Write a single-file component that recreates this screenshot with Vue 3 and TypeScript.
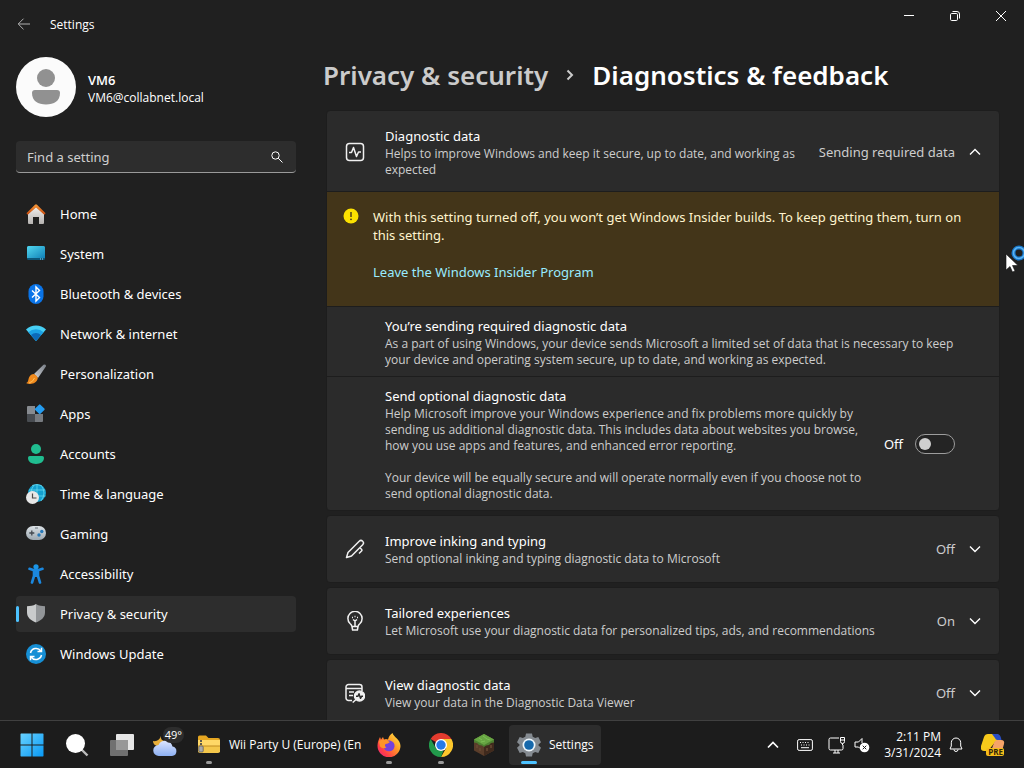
<script setup lang="ts">
import { ref } from 'vue'

interface NavItem {
  label: string
  icon: string
}

interface SettingCard {
  title: string
  description: string
  value: string
  icon: string
}

const search = ref('')
const optionalData = ref(false)
const current = ref('Privacy & security')

const navItems: NavItem[] = [
  {
    label: 'Home',
    icon: `<defs><linearGradient id="roof" x1="0" y1="0" x2="0" y2="1"><stop offset="0" stop-color="#f79a3a"/><stop offset="1" stop-color="#c9490d"/></linearGradient><linearGradient id="wall" x1="0" y1="0" x2="0" y2="1"><stop offset="0" stop-color="#f2f0ee"/><stop offset="1" stop-color="#b5b2b0"/></linearGradient></defs>
      <path d="M2 10 10 2.500 18 10v9a1 1 0 0 1-1 1h-4v-7H7v7H3a1 1 0 0 1-1-1z" fill="url(#wall)"/><path d="M.4 9.200 9 .7a1.400 1.400 0 0 1 2 0l8.600 8.500-1.300 1.500L10 3.400l-8.300 7.300z" fill="url(#roof)"/>`,
  },
  {
    label: 'System',
    icon: `<defs><linearGradient id="screen" x1="0" y1="0" x2="1" y2="1"><stop offset="0" stop-color="#52d8f0"/><stop offset="1" stop-color="#1181b8"/></linearGradient></defs>
      <rect x="1" y="2" width="18" height="14" rx="1.500" fill="#0c5578"/><path d="M2.500 2h15A1.500 1.500 0 0 1 19 3.500V14H1V3.500A1.500 1.500 0 0 1 2.500 2z" fill="url(#screen)"/><path d="M14 15h1m1 0h1" stroke="#8edcf5"/>`,
  },
  {
    label: 'Bluetooth & devices',
    icon: `<rect x="2.500" y="0" width="15" height="20" rx="7.500" fill="#0a74e8"/><path d="m6 6.500 7.500 7L10 17V3l3.500 3.500L6 13.500" fill="none" stroke="#fff" stroke-width="1.400"/>`,
  },
  {
    label: 'Network & internet',
    icon: `<path d="M10 17 0 5.500a14.500 14.500 0 0 1 20 0z" fill="#47d0f5"/><path d="M10 17 2.400 8.200a11 11 0 0 1 15.200 0z" fill="#1ba1e5"/><path d="M10 17 5 11a7.500 7.500 0 0 1 10 0z" fill="#0c69b8"/>`,
  },
  {
    label: 'Personalization',
    icon: `<defs><linearGradient id="handle" x1="1" y1="0" x2="0" y2="1"><stop offset="0" stop-color="#777d85"/><stop offset="1" stop-color="#ced1d6"/></linearGradient></defs>
      <path d="M8 10 17.500.8a1.500 1.500 0 0 1 2.200 2L12 14z" fill="url(#handle)"/><path d="M7.800 10q3 .8 4 4C10.800 20 4 21 0 19c2.500-.8 2-2.500 3-5.500 1-2.500 3-3.500 4.800-3.500z" fill="#f08a1d"/><path d="M3 19q4-1 5.500-5" fill="none" stroke="#ffc15a"/>`,
  },
  {
    label: 'Apps',
    icon: `<path d="M2 2h7v8H1V3a1 1 0 0 1 1-1z" fill="#878b90"/><path d="M1 10h8v8H2a1 1 0 0 1-1-1z" fill="#484c51"/><path d="M9 10h8v7a1 1 0 0 1-1 1H9z" fill="#777b80"/><rect x="10" y="1.500" width="7.500" height="7.500" rx="1" transform="rotate(45 13.750 5.250)" fill="#249cf0"/>`,
  },
  {
    label: 'Accounts',
    icon: `<circle cx="10" cy="5" r="5" fill="#20bd90"/><path d="M3.800 12h12.400q1.800 0 1.800 1.800C18 18 14.500 20 10 20s-8-2-8-6.200Q2 12 3.800 12z" fill="#20bd90"/>`,
  },
  {
    label: 'Time & language',
    icon: `<circle cx="11" cy="9" r="9" fill="#14a0cf"/><path d="M3 6h16M6 1.500q5-2 9 0M15 1q6 8 0 16M8 1Q5 5 5 9m6-9v18m0-6h8.500" fill="none" stroke="#65d8ee" stroke-width=".8"/><circle cx="6.500" cy="13.500" r="6.500" fill="#e7e7e7"/><path d="M6.500 9.500v4.500h4" fill="none" stroke="#4a4a4a" stroke-width="1.200"/>`,
  },
  {
    label: 'Gaming',
    icon: `<defs><linearGradient id="pad" x1="0" y1="0" x2="0" y2="1"><stop offset="0" stop-color="#dce2e6"/><stop offset="1" stop-color="#9da8b1"/></linearGradient></defs>
      <rect y="2" width="20" height="14" rx="7" fill="url(#pad)"/><path d="M5.800 6.500v5M3.300 9h5" stroke="#42484f" stroke-width="1.300"/><circle cx="15.800" cy="7.500" r="1.700" fill="#2779b8"/><circle cx="13" cy="11" r="1.700" fill="#2779b8"/><path d="M9 4h3" stroke="#6b747c"/>`,
  },
  {
    label: 'Accessibility',
    icon: `<circle cx="10" cy="2.800" r="2.600" fill="#1b96e8"/><path d="M3.500 4.800 8 6.300h4l4.500-1.500M8 7v5l-2 6.500M12 7v5l2 6.500" fill="none" stroke="#1b88df" stroke-width="2.600" stroke-linecap="round" stroke-linejoin="round"/><path d="M7.500 6h5v7h-5z" fill="#1b88df"/>`,
  },
  {
    label: 'Privacy & security',
    icon: `<path d="M10 0C7 1.900 4 2.200 1 2.200V8.500c0 5 4 8 9 10z" fill="#c9cbcc"/><path d="M10 0c3 1.900 6 2.200 9 2.200V8.500c0 5-4 8-9 10z" fill="#929598"/>`,
  },
  {
    label: 'Windows Update',
    icon: `<circle cx="10" cy="10" r="10" fill="#168fd5"/><path d="M4.500 9A5.700 5.700 0 0 1 14.800 7M15.500 11A5.700 5.700 0 0 1 5.200 13M15.500 3.800v3.800h-4M4.500 16.200v-3.800h4" fill="none" stroke="#fff" stroke-width="1.500"/>`,
  },
]

const cards: SettingCard[] = [
  {
    title: 'Improve inking and typing',
    description: 'Send optional inking and typing diagnostic data to Microsoft',
    value: 'Off',
    icon: `<path d="M1.500 18.500 3 13.500 14.200 2.300a2.400 2.400 0 0 1 3.500 3.400L6.500 17zM14.800 8.700l1.700 1.600q.8.900 0 1.700L14 14.500"/>`,
  },
  {
    title: 'Tailored experiences',
    description: 'Let Microsoft use your diagnostic data for personalized tips, ads, and recommendations',
    value: 'On',
    icon: `<path d="M7 15.500Q6.600 13.800 5 12.500a7.100 7.100 0 1 1 10 0q-1.600 1.300-2 3zM7 15.500l.6 3.500h4.800l.6-3.500M10 9v6M8 8.500l2 1.500 2-1.500"/><path d="M7 6.500h1m4 0h1M9.500 5.500h1"/>`,
  },
  {
    title: 'View diagnostic data',
    description: 'View your data in the Diagnostic Data Viewer',
    value: 'Off',
    icon: `<path d="M17 8V4a2.500 2.500 0 0 0-2.500-2.500h-11A2.500 2.500 0 0 0 1 4v11a2.500 2.500 0 0 0 2.500 2.500H7M1 5.500h16M4 9h5M4 12.500h4"/><circle cx="14.500" cy="13" r="5" fill="#f0f0f0"/><path d="m11 16.500-3.300 3"/><path d="M11 13.300h2l1-2.500 1.500 4.500 1-2H18" stroke="#2b2b2b"/>`,
  },
]
</script>

<template>
  <div class="desktop">
    <div class="window">
      <header class="titlebar">
        <button class="back" aria-label="Back">
          <svg width="14" height="14" viewBox="0 0 14 14"><path d="M13 7H1.500M6.500 1.700 1.200 7l5.300 5.300" /></svg>
        </button>
        <span class="app-name">Settings</span>
        <div class="controls">
          <button aria-label="Minimize"><svg width="12" height="12" viewBox="0 0 12 12"><path d="M1 5.500h10" /></svg></button>
          <button aria-label="Restore">
            <svg width="12" height="12" viewBox="0 0 12 12"><rect x="1.500" y="3.500" width="7" height="7" rx="1.200" /><path d="M3.500 1.500H8A2.500 2.500 0 0 1 10.500 4v4.500" /></svg>
          </button>
          <button aria-label="Close"><svg width="12" height="12" viewBox="0 0 12 12"><path d="m1 1 10 10M11 1 1 11" /></svg></button>
        </div>
      </header>

      <div class="body">
        <aside class="sidebar">
          <button class="account">
            <svg class="avatar" width="60" height="60" viewBox="0 0 60 60">
              <circle cx="30" cy="30" r="30" fill="#fbfbfb" />
              <circle cx="30" cy="21" r="9" fill="#919191" />
              <path d="M19 33h22q3 0 3 3c0 8-6 11.500-14 11.500S16 44 16 36q0-3 3-3z" fill="#919191" />
            </svg>
            <span class="who">
              <strong>VM6</strong>
              <span>VM6@collabnet.local</span>
            </span>
          </button>

          <div class="search">
            <input v-model="search" type="text" placeholder="Find a setting" aria-label="Find a setting" />
            <svg width="12" height="12" viewBox="0 0 12 12"><circle cx="4.500" cy="4.500" r="3.700" /><path d="m7.200 7.200 4.300 4.300" /></svg>
          </div>

          <nav>
            <a
              v-for="item in navItems"
              :key="item.label"
              href="#"
              class="nav-item"
              :class="{ active: item.label === current }"
              @click.prevent="current = item.label"
            >
              <svg width="20" height="20" viewBox="0 0 20 20" v-html="item.icon"></svg>
              <span>{{ item.label }}</span>
            </a>
          </nav>
        </aside>

        <main>
          <h1>
            <a href="#">Privacy &amp; security</a>
            <svg width="8" height="12" viewBox="0 0 8 12"><path d="m1.500 1.500 4.500 4.500-4.500 4.500" /></svg>
            <span>Diagnostics &amp; feedback</span>
          </h1>

          <div class="scroll">
            <section class="card">
              <button class="row header tall">
                <svg class="glyph" width="20" height="20" viewBox="0 0 20 20"><rect x="1.500" y="1.500" width="17" height="17" rx="3" /><path d="M4 10.500h2.500l2-5 3 9 2-4.500h2.500" /></svg>
                <span class="text">
                  <span class="title">Diagnostic data</span>
                  <span class="desc">Helps to improve Windows and keep it secure, up to date, and working as expected</span>
                </span>
                <span class="value">Sending required data</span>
                <svg class="chevron" width="12" height="8" viewBox="0 0 12 8"><path d="m1 6.500 5-5 5 5" /></svg>
              </button>

              <div class="warning">
                <svg width="16" height="16" viewBox="0 0 16 16"><circle cx="8" cy="8" r="7.500" fill="#fce100" /><path d="M8 4v5" stroke="#43351d" stroke-width="1.400" /><circle cx="8" cy="11.300" r=".9" fill="#43351d" /></svg>
                <div>
                  <p>With this setting turned off, you won’t get Windows Insider builds. To keep getting them, turn on this setting.</p>
                  <a href="#">Leave the Windows Insider Program</a>
                </div>
              </div>

              <div class="row detail">
                <div class="text">
                  <span class="title">You’re sending required diagnostic data</span>
                  <span class="desc">As a part of using Windows, your device sends Microsoft a limited set of data that is necessary to keep your device and operating system secure, up to date, and working as expected.</span>
                </div>
              </div>

              <div class="row detail">
                <div class="text optional">
                  <span class="title">Send optional diagnostic data</span>
                  <p class="desc">Help Microsoft improve your Windows experience and fix problems more quickly by sending us additional diagnostic data. This includes data about websites you browse, how you use apps and features, and enhanced error reporting.</p>
                  <p class="desc">Your device will be equally secure and will operate normally even if you choose not to send optional diagnostic data.</p>
                </div>
                <label class="switch">
                  <span>{{ optionalData ? 'On' : 'Off' }}</span>
                  <input v-model="optionalData" type="checkbox" role="switch" aria-label="Send optional diagnostic data" />
                </label>
              </div>
            </section>

            <section v-for="card in cards" :key="card.title" class="card">
              <button class="row header">
                <svg class="glyph" width="20" height="20" viewBox="0 0 20 20" v-html="card.icon"></svg>
                <span class="text">
                  <span class="title">{{ card.title }}</span>
                  <span class="desc">{{ card.description }}</span>
                </span>
                <span class="value">{{ card.value }}</span>
                <svg class="chevron" width="12" height="8" viewBox="0 0 12 8"><path d="m1 1.500 5 5 5-5" /></svg>
              </button>
            </section>
          </div>
        </main>
      </div>
    </div>

    <footer class="taskbar">
      <button class="task" aria-label="Start">
        <svg width="24" height="24" viewBox="0 0 24 24">
          <defs><linearGradient id="win" x1="0" y1="0" x2="1" y2="1"><stop offset="0" stop-color="#69d2ff" /><stop offset="1" stop-color="#0899f5" /></linearGradient></defs>
          <path d="M1 .5h10.500v11H.5V1zM12.500.5H23l.5.5v10.500h-11zM.5 12.500h11v11H1l-.5-.5zM12.500 12.500h11V23l-.5.5H12.500z" fill="url(#win)" />
        </svg>
      </button>
      <button class="task" aria-label="Search">
        <svg width="24" height="24" viewBox="0 0 24 24"><path d="m16.500 16.500 6 6" stroke="#bdbdbd" stroke-width="2.400" /><circle cx="10.500" cy="10.500" r="9.500" fill="#fff" /></svg>
      </button>
      <button class="task" aria-label="Task view">
        <svg width="24" height="24" viewBox="0 0 24 24"><rect x="6" y="1" width="18" height="16" rx="1" fill="#e6e6e6" /><rect x="0" y="7" width="18" height="16" rx="1" fill="#707070" /><path d="M6 7h12v10H6z" fill="#979797" /></svg>
      </button>
      <button class="task weather" aria-label="Weather">
        <svg width="26" height="24" viewBox="0 0 26 24">
          <defs><linearGradient id="cloud" x1="0" y1="0" x2="0" y2="1"><stop offset="0" stop-color="#dce5ff" /><stop offset="1" stop-color="#8caff2" /></linearGradient></defs>
          <path d="M9 3q-1 5 5 5-1 5-7 5-6 0-6-5 6 1 8-5z" fill="#e8ae38" />
          <path d="M7 23a5.500 5.500 0 0 1-.5-11 7.500 7.500 0 0 1 14 1.500A4.800 4.800 0 0 1 20 23z" fill="url(#cloud)" />
        </svg>
        <span class="badge">49°</span>
      </button>
      <button class="task app folder">
        <svg width="24" height="24" viewBox="0 0 24 24">
          <path d="M1 4a1.500 1.500 0 0 1 1.500-1.500H9L11.500 5H21a2 2 0 0 1 2 2v5H1z" fill="#e5a621" />
          <path d="M1 7h22v12H1z" fill="#ffd867" /><path d="M1 13h22v5a2 2 0 0 1-2 2H3a2 2 0 0 1-2-2z" fill="#f4c74b" />
          <path d="M1 13h22" stroke="#c08d22" /><path d="M4 7v7" stroke="#5e5a4c" stroke-width="2" stroke-dasharray="2 1" /><rect x="1.800" y="13" width="4.400" height="6" rx="1" fill="#aaa" stroke="#555" stroke-width=".7" />
        </svg>
        <span>Wii Party U (Europe) (En</span>
      </button>
      <button class="task pinned running" aria-label="Firefox">
        <svg width="24" height="24" viewBox="0 0 24 24">
          <defs><linearGradient id="fox" x1="1" y1="0" x2="0" y2="1"><stop offset="0" stop-color="#fff04a" /><stop offset=".4" stop-color="#ff9a25" /><stop offset=".75" stop-color="#ff3d48" /><stop offset="1" stop-color="#e5218e" /></linearGradient></defs>
          <path d="M15.500 0c1 4 8 6.500 8 13A11.500 11.500 0 0 1 .5 12.500C.5 9 2 6 3 4l1 2.500L6 4l1 2.500q2-.8 4 0Q12 2 15.500 0z" fill="url(#fox)" />
          <path d="M7 10q2-3 6-2.500 5 1.500 4.500 6A5.500 5.500 0 0 1 7 15z" fill="#7541dc" /><path d="M2 8q5-3 11 1-2 2-4.500 2Q7 13 9.500 14.500q-4 2-6.500-1z" fill="#ff9428" />
        </svg>
      </button>
      <button class="task pinned running" aria-label="Chrome">
        <svg width="24" height="24" viewBox="0 0 24 24">
          <path d="M12 12 1.600 6A12 12 0 0 1 22.400 6z" fill="#e33b2e" /><path d="M12 6h10.400A12 12 0 0 1 12 24l5.200-9z" fill="#fcc72c" /><path d="M1.600 6 6.800 15l5.200 3 2.500-.5L12 24A12 12 0 0 1 1.600 6z" fill="#229a4b" />
          <circle cx="12" cy="12" r="6" fill="#fff" /><circle cx="12" cy="12" r="4.700" fill="#2479e8" />
        </svg>
      </button>
      <button class="task minecraft" aria-label="Minecraft">
        <svg width="22" height="24" viewBox="0 0 22 24"><path d="M11 1 21 6.500v11L11 23 1 17.500v-11z" fill="#5a3d2a" /><path d="m11 12 10-5.500v11L11 23z" fill="#402a1d" /><path d="M11 1 21 6.500v3L18 10l-2 2-3 .5-2 1.500-2-1.500-3-.5-2-2-3-.5v-3z" fill="#4d7f31" /><path d="M11 1 21 6.500 11 12 1 6.500z" fill="#67a543" /><path d="m6 5 3 2m1-4 4 3m-6 3 4-1m2-2 3 1" stroke="#7cbd55" /><path d="M4 12v3m3 0v3m7-3v3m4-6v3" stroke="#6a4a34" stroke-width="1.500" /></svg>
      </button>
      <button class="task app selected">
        <svg width="24" height="24" viewBox="0 0 24 24">
          <path d="m9 .5-.7 3.200L5.800 5 2.700 4 0 9.200l2.500 2.200v1.200L0 14.800 2.700 20l3.100-1 2.500 1.300.7 3.200h6l.7-3.200 2.500-1.300 3.100 1 2.700-5.200-2.500-2.200v-1.200L24 9.200 21.300 4l-3.100 1-2.500-1.300L15 .5z" fill="#858b91" />
          <circle cx="12" cy="12" r="6.500" fill="#eef6fb" /><circle cx="12" cy="12" r="4.800" fill="#1668ab" />
        </svg>
        <span>Settings</span>
      </button>

      <div class="tray">
        <button aria-label="Show hidden icons"><svg width="12" height="8" viewBox="0 0 12 8"><path d="m1 6.500 5-5 5 5" stroke-width="1.700" /></svg></button>
        <button aria-label="Touch keyboard">
          <svg width="16" height="12" viewBox="0 0 16 12"><rect x=".6" y=".6" width="14.800" height="10.800" rx="1.500" /><path d="M3 3.500h1m1.500 0h1m1.500 0h1m1.500 0h1M4 6h1m1.500 0h1M9 6h1m1.500 0h1M4 8.700h8" /></svg>
        </button>
        <button class="sound" aria-label="Network and volume">
          <svg width="18" height="18" viewBox="0 0 18 18"><path d="M11 2H2.500A1.500 1.500 0 0 0 1 3.500v9A1.500 1.500 0 0 0 2.500 14h11a1.500 1.500 0 0 0 1.500-1.500V9M5 17h7m-5-3v3m3-3v3" /><path d="M12.500 1.500h4v4q0 2-2 2t-2-2zM12.500 4h4M14.500 7.500V9" /></svg>
          <svg width="16" height="16" viewBox="0 0 16 16"><path d="M8 1.500 4.500 5H1v5h3.500l1.500 1.500M8 1.500V6" /><circle cx="10.500" cy="10.500" r="4.800" fill="#fff" stroke="none" /><path d="m8.700 8.700 3.600 3.600m0-3.600-3.600 3.600" stroke="#1c1c1c" /></svg>
        </button>
        <button class="clock"><span>2:11 PM</span><span>3/31/2024</span></button>
        <button class="bell" aria-label="Notifications">
          <svg width="14" height="16" viewBox="0 0 14 16"><path d="M7 1a4.700 4.700 0 0 0-4.700 4.700V9L1 12h12l-1.300-3V5.700A4.700 4.700 0 0 0 7 1zM5 12.500a2 2 0 0 0 4 0" /></svg>
        </button>
        <button class="copilot" aria-label="Copilot">
          <svg width="24" height="24" viewBox="0 0 24 24">
            <path d="M7 1h8q3 0 4 4l1 3h-5L7 18H3q-4 0-3-5L3 4q1-3 4-3z" fill="#f7c91b" /><path d="M11 1h5q3 0 4 4l.5 2h-4q-2 0-2.500-2z" fill="#294ec4" /><path d="M17 7h3q4 0 3 4l-2 7H10l3-8q1-3 4-3z" fill="#f5a368" />
            <rect x="5" y="15" width="18" height="8" rx="2" fill="#f7bd1b" />
          </svg>
          <span class="pre">PRE</span>
        </button>
      </div>
    </footer>

    <svg class="cursor" width="24" height="30" viewBox="0 0 24 30">
      <circle cx="14" cy="8" r="5.500" fill="none" stroke="#1877c9" stroke-width="4" /><circle cx="14" cy="8" r="5.500" fill="none" stroke="#5bb3f3" stroke-width="1.500" />
      <path d="M1 9v16l4-3.500 2.500 5.500 2.500-1-2.500-5.500H13z" fill="#fff" stroke="#111" stroke-width=".6" />
    </svg>
  </div>
</template>

<style>
body {
  margin: 0;
  background: #202020;
}
</style>

<style scoped>
* {
  box-sizing: border-box;
}

.desktop {
  position: relative;
  display: flex;
  flex-direction: column;
  height: 100vh;
  overflow: hidden;
  background: #202020;
  color: #fff;
  font: 13px/20px 'Noto Sans', 'Open Sans', sans-serif;
}

button {
  display: flex;
  align-items: center;
  justify-content: center;
  padding: 0;
  border: 0;
  background: none;
  color: inherit;
  font: inherit;
  text-align: left;
}

svg {
  flex: none;
}

a {
  color: inherit;
  text-decoration: none;
}

p {
  margin: 0;
}

.window {
  display: flex;
  flex: 1;
  flex-direction: column;
  min-height: 0;
}

.titlebar {
  display: flex;
  height: 48px;
}

.titlebar svg,
.search svg,
.chevron,
.tray svg,
h1 svg {
  fill: none;
  stroke: #fff;
}

.back {
  width: 48px;
}

.back svg {
  stroke: #b0b0b0;
}

.app-name,
.who,
.desc,
.taskbar {
  font-family: 'Open Sans', 'Noto Sans', sans-serif;
  font-size: 12px;
}

.app-name {
  align-self: center;
  padding: 2px 0 0 2px;
}

.controls {
  display: flex;
  margin-left: auto;
}

.controls button {
  width: 46px;
  height: 32px;
}

.body {
  display: flex;
  flex: 1;
  min-height: 0;
}

.sidebar {
  flex: none;
  width: 296px;
  padding: 9px 0 0 16px;
}

.account {
  gap: 12px;
}

.who {
  display: flex;
  flex-direction: column;
  padding-top: 4px;
  line-height: 18px;
}

.who strong {
  font-size: 13px;
  font-weight: 600;
}

.search {
  display: flex;
  align-items: center;
  height: 32px;
  margin: 24px 0 23px;
  padding: 0 13px 0 11px;
  border-bottom: 1px solid #9a9a9a;
  border-radius: 4px;
  background: #2d2d2d;
}

.search input {
  flex: 1;
  min-width: 0;
  padding: 0;
  border: 0;
  outline: 0;
  background: none;
  color: #fff;
  font: inherit;
}

.search input::placeholder {
  color: #cfcfcf;
  opacity: 1;
}

nav {
  display: flex;
  flex-direction: column;
  gap: 4px;
}

.nav-item {
  position: relative;
  display: flex;
  align-items: center;
  gap: 14px;
  height: 36px;
  padding-left: 10px;
  border-radius: 4px;
}

.nav-item.active {
  background: #2d2d2d;
}

.nav-item.active::before {
  position: absolute;
  top: 10px;
  left: 0;
  width: 3px;
  height: 16px;
  border-radius: 2px;
  background: #4cc2ff;
  content: '';
}

main {
  display: flex;
  flex: 1;
  flex-direction: column;
  min-width: 0;
  padding: 0 24px 0 30px;
}

h1 {
  display: flex;
  align-items: center;
  gap: 18px;
  height: 62px;
  margin: 0 0 0 -3px;
  padding-bottom: 8px;
  font-size: 26px;
  font-weight: 600;
  line-height: 36px;
  white-space: nowrap;
}

h1 a {
  color: #cbcbcb;
}

h1 svg {
  stroke: #cbcbcb;
  stroke-width: 2;
}

.scroll {
  display: flex;
  flex: 1;
  flex-direction: column;
  gap: 4px;
  min-height: 0;
  overflow: hidden;
}

.card {
  flex: none;
  border: 1px solid #1d1d1d;
  border-radius: 4px;
  background: #2b2b2b;
}

.row {
  display: flex;
  align-items: center;
  width: 100%;
}

.header {
  min-height: 66px;
  padding: 0 18px;
}

.header.tall {
  min-height: 80px;
  padding-top: 2px;
}

.glyph {
  margin-right: 20px;
  fill: none;
  stroke: #f0f0f0;
  stroke-width: 1.5;
  stroke-linejoin: round;
}

.text {
  display: flex;
  flex: 1;
  flex-direction: column;
}

.desc {
  color: #cdcdcd;
  line-height: 16px;
}

.desc + .desc {
  margin-top: 16px;
}

.value {
  margin: 0 14px 0 16px;
  color: #cdcdcd;
}

.chevron {
  stroke-width: 1.4;
}

.warning {
  display: flex;
  gap: 14px;
  height: 115px;
  padding: 16px 24px 0 16px;
  border-top: 1px solid #1d1d1d;
  background: #433519;
  color: #fff4ce;
  line-height: 18px;
}

.warning a {
  display: inline-block;
  margin-top: 19px;
  color: #99ebff;
}

.detail {
  padding: 9px 44px 8px 58px;
  border-top: 1px solid #1d1d1d;
}

.optional {
  flex: 0 1 488px;
}

.switch {
  display: flex;
  gap: 12px;
  align-items: center;
  margin-left: auto;
}

.switch input {
  width: 40px;
  height: 20px;
  margin: 0;
  border: 1px solid #9d9d9d;
  border-radius: 10px;
  background: #242424;
  appearance: none;
}

.switch input::before {
  display: block;
  width: 12px;
  height: 12px;
  margin: 3px;
  border-radius: 50%;
  background: #cfcfcf;
  content: '';
}

.switch input:checked::before {
  margin-left: 23px;
}

.taskbar {
  display: flex;
  flex: none;
  align-items: center;
  height: 48px;
  padding: 0 9px;
  border-top: 1px solid #404040;
  background: #1c1c1c;
}

.task {
  position: relative;
  width: 45px;
  height: 40px;
}

.task.app {
  gap: 8px;
  justify-content: flex-start;
  padding-left: 8px;
  border-radius: 4px;
  white-space: nowrap;
}

.task.folder {
  width: 174px;
}

.task.pinned {
  width: 52px;
}

.task.minecraft {
  width: 34px;
}

.task.selected {
  width: 92px;
  margin-left: 8px;
  background: #2d2d2d;
}

.running::after,
.folder::after,
.selected::after {
  position: absolute;
  bottom: 1px;
  left: 50%;
  width: 6px;
  height: 3px;
  margin-left: -3px;
  border-radius: 2px;
  background: #9a9a9a;
  content: '';
}

.folder::after {
  left: 20px;
}

.selected::after {
  left: 12px;
  width: 16px;
  margin-left: 0;
  background: #4cc2ff;
}

.weather {
  padding-right: 3px;
}

.badge {
  position: absolute;
  top: 2px;
  right: 5px;
  padding: 0 2px;
  border-radius: 8px;
  background: #2d2d2d;
  font-size: 11px;
  line-height: 16px;
}

.tray {
  display: flex;
  align-items: center;
  margin-left: auto;
}

.tray button {
  width: 32px;
  height: 40px;
}

.tray .sound {
  gap: 8px;
  width: 56px;
}

.tray .clock {
  flex-direction: column;
  align-items: flex-end;
  width: 64px;
  line-height: 16px;
}

.tray .bell {
  width: 30px;
}

.tray .copilot {
  position: relative;
  width: 44px;
}

.copilot svg {
  stroke: none;
}

.pre {
  position: absolute;
  right: 12px;
  bottom: 9px;
  color: #30250a;
  font-size: 8px;
  font-weight: 700;
  line-height: 8px;
}

.cursor {
  position: absolute;
  top: 245px;
  right: -5px;
  pointer-events: none;
}
</style>
